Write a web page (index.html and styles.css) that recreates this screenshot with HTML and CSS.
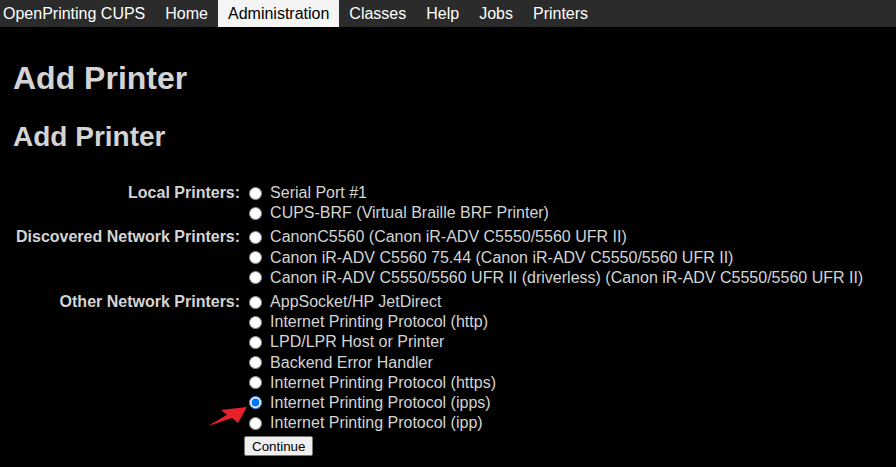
FILE: index.html
```html
<!DOCTYPE html>
<html>
<head>
<meta charset="utf-8">
<title>Add Printer - CUPS</title>
<link rel="stylesheet" href="styles.css">
</head>
<body>
<nav class="header">
  <span class="item">OpenPrinting CUPS</span>
  <span class="item">Home</span>
  <span class="item active">Administration</span>
  <span class="item">Classes</span>
  <span class="item">Help</span>
  <span class="item">Jobs</span>
  <span class="item">Printers</span>
</nav>
<main class="body">
  <h1 class="title">Add Printer</h1>
  <h2 class="title2">Add Printer</h2>
  <form class="form">
    <table class="edit">
      <tr>
        <th class="label">Local Printers:</th>
        <td class="opts">
          <label class="opt"><input type="radio" name="dev">Serial Port #1</label>
          <label class="opt"><input type="radio" name="dev">CUPS-BRF (Virtual Braille BRF Printer)</label>
        </td>
      </tr>
      <tr>
        <th class="label">Discovered Network Printers:</th>
        <td class="opts">
          <label class="opt"><input type="radio" name="dev">CanonC5560 (Canon iR-ADV C5550/5560 UFR II)</label>
          <label class="opt"><input type="radio" name="dev">Canon iR-ADV C5560 75.44 (Canon iR-ADV C5550/5560 UFR II)</label>
          <label class="opt"><input type="radio" name="dev">Canon iR-ADV C5550/5560 UFR II (driverless) (Canon iR-ADV C5550/5560 UFR II)</label>
        </td>
      </tr>
      <tr>
        <th class="label">Other Network Printers:</th>
        <td class="opts">
          <label class="opt"><input type="radio" name="dev">AppSocket/HP JetDirect</label>
          <label class="opt"><input type="radio" name="dev">Internet Printing Protocol (http)</label>
          <label class="opt"><input type="radio" name="dev">LPD/LPR Host or Printer</label>
          <label class="opt"><input type="radio" name="dev">Backend Error Handler</label>
          <label class="opt"><input type="radio" name="dev">Internet Printing Protocol (https)</label>
          <label class="opt sel"><input type="radio" name="dev" checked>Internet Printing Protocol (ipps)
            <svg class="arrow" width="41" height="22" viewBox="0 0 41 22"><path d="M1 21 L20 9.7 L14 5 L40 2 L31 18 L25 13 Z" fill="#e8202a"/></svg>
          </label>
          <label class="opt"><input type="radio" name="dev">Internet Printing Protocol (ipp)</label>
        </td>
      </tr>
      <tr>
        <th></th>
        <td class="actions"><button type="button" class="btn">Continue</button></td>
      </tr>
    </table>
  </form>
</main>
</body>
</html>
```
FILE: styles.css
```css
html, body {
  margin: 0;
  padding: 0;
  background: #000;
  color: #d4d4d4;
  font-family: "Liberation Sans", Arial, sans-serif;
  font-size: 16px;
}
.header {
  display: flex;
  background: #2b2b2b;
  height: 27px;
  align-items: stretch;
}
.item {
  display: flex;
  align-items: center;
  padding: 0 10px;
  color: #fff;
  font-size: 16px;
  white-space: nowrap;
}
.item:first-child {
  padding-left: 3px;
}
.item.active {
  background: #f5f5f5;
  color: #000;
}
.body {
  padding: 0 13px;
}
.title {
  margin: 33px 0 0;
  font-size: 32px;
  line-height: 36px;
  color: #d4d4d4;
}
.title2 {
  margin: 25px 0 0;
  font-size: 28px;
  line-height: 32px;
  color: #d4d4d4;
}
.form {
  margin-top: 28px;
}
.edit {
  border-collapse: collapse;
}
.label {
  text-align: right;
  vertical-align: top;
  font-weight: bold;
  color: #d4d4d4;
  padding: 2px 4px 2px 3px;
  line-height: 20px;
  white-space: nowrap;
}
.opts {
  padding: 2px 0;
  vertical-align: top;
}
.opt {
  display: flex;
  align-items: center;
  height: 20.2px;
  white-space: nowrap;
  position: relative;
}
.opt input {
  margin: 0 8px 0 5px;
  width: 13px;
  height: 13px;
}
.arrow {
  position: absolute;
  left: -37px;
  top: 12px;
}
.actions {
  padding: 1px 0 2px;
}
.btn {
  display: block;
  font-family: "Liberation Sans", Arial, sans-serif;
  font-size: 13.33px;
  height: 20px;
  padding: 0 7px;
  margin: 0;
  background: #efefef;
  border: 1px solid #767676;
  border-radius: 2px;
  color: #000;
}
```
